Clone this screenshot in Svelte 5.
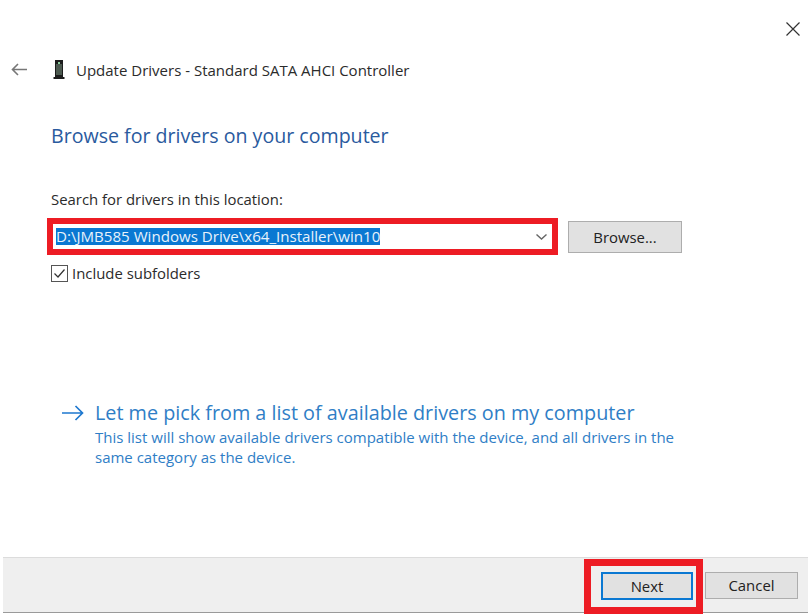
<script>
  const path = 'D:\\JMB585 Windows Drive\\x64_Installer\\win10';
</script>

<div class="window">
  <div class="close-row">
    <svg class="close" width="14" height="14" viewBox="0 0 14 14" aria-label="Close">
      <path d="M0.5 0.5 L13.5 13.5 M13.5 0.5 L0.5 13.5" />
    </svg>
  </div>

  <header class="titlebar">
    <svg class="back" width="16" height="13" viewBox="0 0 16 13" aria-label="Back">
      <path d="M16 6.5 H1.5 M7 1 L1.5 6.5 L7 12" />
    </svg>
    <svg class="device" width="12" height="19" viewBox="0 0 12 19">
      <rect x="2" y="0" width="8" height="17" fill="#1d1d1d" />
      <rect x="3" y="4" width="6" height="11" fill="#4c5a50" />
      <rect x="5" y="2" width="2" height="2" fill="#8fd0a0" />
      <rect x="0.5" y="17" width="11" height="2" fill="#1d1d1d" />
    </svg>
    <span class="title">Update Drivers - Standard SATA AHCI Controller</span>
  </header>

  <main class="content">
    <h1>Browse for drivers on your computer</h1>

    <label class="search-label" for="path">Search for drivers in this location:</label>
    <div class="search-row">
      <div class="combo" id="path">
        <span class="selected">{path}</span>
        <svg class="chevron" width="11" height="6" viewBox="0 0 11 6">
          <path d="M0.5 0.5 L5.5 5 L10.5 0.5" />
        </svg>
      </div>
      <button class="btn browse">Browse...</button>
    </div>

    <div class="check-row">
      <svg class="check" width="17" height="17" viewBox="0 0 17 17">
        <rect x="0.5" y="0.5" width="16" height="16" fill="#fff" stroke="#555" />
        <path d="M3.5 8.5 L7 12 L13.5 4.5" fill="none" stroke="#333" stroke-width="1.2" />
      </svg>
      <span>Include subfolders</span>
    </div>

    <div class="pick">
      <svg class="pick-arrow" width="22" height="16" viewBox="0 0 22 16">
        <path d="M0 8 H20.5 M13.5 1 L20.5 8 L13.5 15" />
      </svg>
      <div class="pick-text">
        <div class="pick-title">Let me pick from a list of available drivers on my computer</div>
        <p>This list will show available drivers compatible with the device, and all drivers in the same category as the device.</p>
      </div>
    </div>
  </main>

  <footer class="footer">
    <div class="next-mark">
      <button class="btn next">Next</button>
    </div>
    <button class="btn cancel">Cancel</button>
  </footer>
</div>

<style>
  :global(body) {
    margin: 0;
    background: #fff;
  }

  .window {
    width: 808px;
    height: 615px;
    display: flex;
    flex-direction: column;
    overflow: hidden;
    background: #fff;
    font-family: "Open Sans", "Noto Sans", sans-serif;
    color: #1a1a1a;
  }

  .close-row {
    height: 36px;
    flex: none;
    display: flex;
    justify-content: flex-end;
    align-items: flex-end;
    padding-right: 8px;
  }

  .close path {
    stroke: #333;
    stroke-width: 1.2;
    fill: none;
  }

  .titlebar {
    height: 67px;
    flex: none;
    display: flex;
    align-items: center;
    padding-left: 11px;
  }

  .back {
    margin-right: 26px;
  }

  .back path {
    stroke: #777;
    stroke-width: 1.6;
    fill: none;
  }

  .device {
    margin-right: 11px;
  }

  .title {
    font-size: 15px;
    color: #2b2b2b;
  }

  .content {
    flex: 1;
    padding: 0 0 0 51px;
    min-height: 0;
  }

  h1 {
    margin: 0;
    padding-top: 21px;
    font-size: 19.6px;
    font-weight: 400;
    line-height: 24px;
    color: #2a5a9e;
  }

  .search-label {
    display: block;
    margin-top: 42px;
    font-size: 14.9px;
    line-height: 18px;
    color: #2b2b2b;
  }

  .search-row {
    display: flex;
    align-items: center;
    margin-top: 10px;
    margin-left: -4px;
  }

  .combo {
    width: 511px;
    height: 37px;
    box-sizing: border-box;
    border: 6px solid #ed1c24;
    padding: 0 5px 0 3px;
    display: flex;
    align-items: center;
    justify-content: space-between;
  }

  .selected {
    background: #0a78d2;
    color: #e8f2fb;
    font-size: 15.1px;
    line-height: 17px;
    white-space: nowrap;
  }

  .chevron path {
    stroke: #666;
    stroke-width: 1.4;
    fill: none;
  }

  .btn {
    font: inherit;
    font-size: 14.9px;
    color: #222;
    background: #e1e1e1;
    border: 1px solid #adadad;
    padding: 0;
  }

  .browse {
    width: 114px;
    height: 32px;
    margin-left: 10px;
  }

  .check-row {
    display: flex;
    align-items: center;
    gap: 4px;
    margin-top: 9px;
    font-size: 14.9px;
    line-height: 18px;
    color: #2b2b2b;
  }

  .pick {
    display: flex;
    margin-top: 119px;
    margin-left: 11px;
  }

  .pick-arrow {
    flex: none;
    margin-top: 4px;
    margin-right: 11px;
  }

  .pick-arrow path {
    stroke: #1e78cf;
    stroke-width: 1.7;
    fill: none;
  }

  .pick-title {
    font-size: 19.8px;
    line-height: 24px;
    color: #2f7ec6;
    white-space: nowrap;
  }

  .pick p {
    margin: 2px 0 0;
    width: 590px;
    font-size: 15px;
    line-height: 20px;
    color: #2f7ec6;
  }

  .footer {
    flex: none;
    height: 55px;
    margin-left: 3px;
    margin-bottom: 3px;
    box-sizing: border-box;
    background: #efefef;
    border-top: 1px solid #dcdcdc;
    box-shadow: 0 1px 0 #9a9a9a;
    display: flex;
    align-items: center;
    justify-content: flex-end;
    padding-right: 10px;
  }

  .next-mark {
    width: 119px;
    height: 55px;
    box-sizing: border-box;
    border: 7px solid #ed1c24;
    display: flex;
    align-items: center;
    justify-content: flex-end;
    padding-right: 3px;
    margin-right: 2px;
    margin-top: 2px;
  }

  .next {
    width: 92px;
    height: 28px;
    border: 2px solid #0a78d2;
  }

  .cancel {
    width: 93px;
    height: 27px;
  }
</style>
